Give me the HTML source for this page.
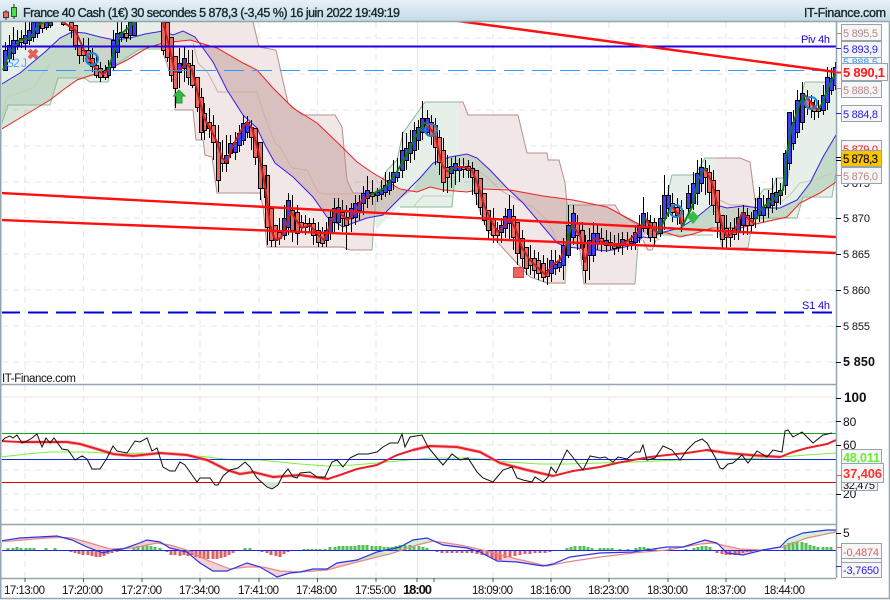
<!DOCTYPE html>
<html><head><meta charset="utf-8"><title>France 40</title>
<style>
html,body{margin:0;padding:0;background:#fff}
svg{display:block}
text{font-family:"Liberation Sans",Arial,sans-serif}
</style></head><body>
<svg xmlns="http://www.w3.org/2000/svg" width="890" height="600" viewBox="0 0 890 600">
<defs>
<linearGradient id="tb" x1="0" y1="0" x2="0" y2="1"><stop offset="0" stop-color="#e6f1f7"/><stop offset="1" stop-color="#c6dbe6"/></linearGradient>
<clipPath id="cp"><rect x="2" y="22" width="834" height="362"/></clipPath>
<clipPath id="cp2"><rect x="2" y="385" width="834" height="193"/></clipPath>
</defs>
<rect width="890" height="600" fill="#fff"/>

<!-- grid -->
<g stroke="#e6e6e6" fill="none">
<path stroke-dasharray="6 5" d="M25 22V578M83.500 22V578M142 22V578M200 22V578M259 22V578M317.500 22V578M376 22V578M493 22V578M551 22V578M609 22V578M668 22V578M726 22V578M785 22V578"/>
<path d="M417.500 22V578"/>
<path stroke-dasharray="6 5" d="M2 38H836M2 74H836M2 110H836M2 146H836M2 182H836M2 218H836M2 254H836M2 290H836M2 326H836M2 362H836M2 422H836M2 445H836M2 470H836M2 494H836M2 510H836"/>
<path d="M2 397H836"/>
</g>

<g clip-path="url(#cp)">
<!-- light envelopes -->
<g stroke-width="1">
<path fill="#e6f0e8" stroke="none" d="M2 22H163V49H140L110 68V82H90L84 78H58L50 105H8L2 123Z"/>
<path fill="#f2e9e8" stroke="none" d="M100 22H112V64H100Z"/>
<path fill="#f0e7e6" stroke="none" d="M163 22H253L259 47 276 50 288 103 302 115 335 116 342 127 347 180 353 193 376 197 372 250H350L343 248 267 247 263 207 260 194 217 193 212 157 205 155 203 140 196 140 193 110H175V87L163 53Z"/>
<path fill="#e6f0e8" stroke="none" d="M376 197L387 170 397 160 403 133 425 102H459V160L455 175 452 207H406L398 207 376 230Z"/>
<path fill="#f0e7e6" stroke="none" d="M459 102H463L468 115H518L527 153H547L548 160H559L565 183 567 205 565 284H547L530 277 512 258 500 245 487 230 477 203 472 170 459 160Z"/>
<path fill="#e6f0e8" stroke="none" d="M567 205H573V240L565 284Z"/>
<path fill="#f0e7e6" stroke="none" d="M573 205H615L621 215 636 224 643 240 638 245 635 284H584L580 250 573 240Z"/>
<path fill="#f0e7e6" stroke="none" d="M640 225L660 230 658 240 650 250H645Z"/>
<path fill="#e6f0e8" stroke="none" d="M658 235L672 175H695L705 158H716V215L713 230 660 235Z"/>
<path fill="#f0e7e6" stroke="none" d="M716 158H740L750 162 756 200 748 248H722L716 215Z"/>
<path fill="#e6f0e8" stroke="none" d="M756 200L764 189H773L776 178H788L797 110 805 82H827L832 68 836 67V173L832 196H803L797 219H752Z"/>
</g>
<!-- dark fills -->
<path fill="#3c7c48" fill-opacity=".2" d="M0 85L20 73 45 52 60 38 72 32 85 33 100 37 115 40 130 38 145 34 163 31 173 35 183 31 195 37 190 40 163 43 147 48 127 60 107 70 77 80 63 90 50 100 20 118 0 130Z"/>
<path fill="#8c4040" fill-opacity=".23" d="M190 40L217 48 243 63 257 70 273 88 293 108 317 123 340 145 357 162 373 173 400 190 412 191 398 200 383 215 367 218 353 223 343 227 327 217 313 197 293 177 275 163 265 145 257 128 243 115 227 90 213 62 195 37Z"/>
<path fill="#3c7c48" fill-opacity=".2" d="M412 191L420 178 433 163 450 157 467 154 477 158 490 170 507 188 483 189 467 192 443 190 430 187 417 192Z"/>
<path fill="#8c4040" fill-opacity=".22" d="M507 188L510 190 543 196 573 200 607 207 633 221 650 230 643 237 633 245 613 251 590 250 563 247 557 243 540 223 523 203Z"/>
<path fill="#3c7c48" fill-opacity=".2" d="M650 238L660 233 680 228 697 217 713 204 727 208 743 206 760 208 780 208 797 200 810 183 823 157 836 135V182L820 193 800 203 787 217 760 223 740 228 712 228 693 234 680 237 667 233Z"/>
<!-- step lines -->
<g fill="none" stroke="#8fb898" stroke-width="1">
<path d="M2 123L8 105H50L58 78H84L90 82H108L110 68 140 49H163"/>
<path d="M0 123L7 97 33 88 50 63" stroke="#b8d2bc"/>
<path d="M376 197L372 250"/>
<path d="M376 197L387 170 397 160 403 133 425 102H459"/>
<path d="M400 207H452L455 175 459 160"/>
<path d="M413 207L423 196H452" stroke="#b8d2bc"/>
<path d="M565 284L567 205H573"/>
<path d="M638 245L635 284"/>
<path d="M658 235L672 175H695L705 158H716"/>
<path d="M660 235H713"/>
<path d="M748 248L756 200 764 189H773L776 178H788L797 110 805 82H827L832 68H836"/>
<path d="M752 218H797L803 197H832L836 173"/>
<path d="M775 207L790 195 800 183 815 180 832 173" stroke="#b8d2bc"/>
</g>
<g fill="none" stroke="#b58f8c" stroke-width="1">
<path d="M253 22L259 47 276 50 288 103 302 115H335L342 127 347 180 353 193H376"/>
<path d="M163 53L175 87V110H193L196 140H203L205 155 212 157 217 193H260L263 207 267 247H343L350 250H372"/>
<path d="M193 43L198 63 208 73 218 92H257L265 117 275 143 280 147 292 168 307 170 318 192 323 194H353" stroke="#cfaeab"/>
<path d="M459 102H463L468 115H518L527 153H547L548 160H559L565 183 567 205"/>
<path d="M472 170L477 203 487 230 500 245 512 258 530 277 547 283H565"/>
<path d="M455 160L472 167 487 177 500 190 518 200 533 207 547 220 557 240" stroke="#cfaeab"/>
<path d="M573 205H615L621 215 636 224 650 228"/>
<path d="M573 240L580 250 584 284H635"/>
<path d="M590 235L610 240H630L645 232 660 240" stroke="#cfaeab"/>
<path d="M643 240L648 250H652L656 240"/>
<path d="M716 158H740L750 162 755 200"/>
<path d="M716 215L722 248H748"/>
<path d="M715 198L730 205H745L755 208" stroke="#cfaeab"/>
</g>
<!-- MA lines -->
<path fill="none" stroke="#3a20e8" stroke-width="1" d="M0 85L20 73 45 52 60 38 72 32 85 33 100 37 115 40 130 38 145 34 163 31 173 35 183 31 195 37 213 62 227 90 243 115 257 128 265 145 275 163 293 177 313 197 327 217 343 227 353 223 367 218 383 215 398 200 410 188 420 178 433 163 450 157 467 154 477 158 490 170 507 188 523 203 540 223 557 243 567 247 587 249 607 251 633 245 643 237 650 238 660 233 680 228 697 217 713 204 727 208 743 206 760 208 780 208 797 200 810 183 823 157 836 135"/>
<path fill="none" stroke="#f02020" stroke-width="1" d="M0 130L20 118 50 100 63 90 77 80 107 70 127 60 147 48 163 43 190 40 217 48 243 63 257 70 273 88 293 108 317 123 340 145 357 162 373 173 400 189 417 192 430 187 443 190 467 192 483 189 510 190 543 196 573 200 607 207 633 221 650 230 667 233 680 237 693 234 712 228 740 228 760 223 787 217 800 203 820 193 836 182"/>

<!-- wicks -->
<path fill="none" stroke="#000" stroke-width="1" d="M5.500 42V70M9.500 35V62M13.500 27V60M17.500 30V50M21.500 30V48M25.500 22V50M29.500 22V45M33.500 22V42M37.500 22V38M42.500 22V33M46.500 22V30M50.500 22V28M63.500 22V26M71.500 22V38M75.500 25V50M79.500 45V64M83.500 38V62M88.500 38V64M92.500 48V72M96.500 55V78M100.500 62V82M105.500 65V80M108.500 60V78M113.500 30V70M117.500 22V58M121.500 22V42M126.500 25V42M130.500 22V40M134.500 22V36M163.500 22V55M167.500 22V62M171.500 37V82M175.500 56V108M179.500 48V88M184.500 47V82M188.500 50V85M192.500 50V88M197.500 77V112M201.500 88V140M204.500 103V140M209.500 108V138M213.500 115V160M218.500 125V192M222.500 140V172M226.500 135V172M230.500 135V158M235.500 132V160M239.500 125V152M243.500 115V145M247.500 116V138M251.500 120V150M255.500 128V165M260.500 142V200M264.500 165V198M267.500 175V245M271.500 208V247M275.500 225V247M279.500 218V245M284.500 205V240M288.500 193V235M292.500 195V242M297.500 205V245M301.500 215V232M305.500 215V235M309.500 218V232M313.500 218V245M318.500 222V247M322.500 227V247M326.500 222V247M330.500 210V240M334.500 198V232M338.500 198V230M342.500 200V232M346.500 205V250M351.500 203V232M355.500 195V225M359.500 195V220M363.500 186V215M367.500 176V208M372.500 180V205M377.500 188V202M381.500 180V200M385.500 172V197M389.500 172V195M393.500 160V190M397.500 158V182M402.500 132V178M406.500 133V170M410.500 130V163M414.500 122V160M418.500 120V150M422.500 101V140M427.500 110V135M431.500 115V145M435.500 118V165M439.500 130V175M443.500 138V192M447.500 155V193M451.500 158V188M455.500 156V185M459.500 158V182M463.500 158V178M468.500 160V178M472.500 162V195M476.500 170V205M480.500 178V215M484.500 193V225M488.500 210V240M493.500 208V243M497.500 222V243M501.500 218V243M505.500 208V238M509.500 195V240M513.500 205V250M517.500 222V265M522.500 230V268M526.500 247V275M530.500 245V275M534.500 250V278M538.500 252V280M543.500 255V282M547.500 258V285M551.500 250V282M555.500 250V275M559.500 255V272M563.500 238V280M568.500 205V258M573.500 205V245M577.500 215V250M582.500 222V260M585.500 235V283M589.500 228V280M593.500 222V262M597.500 225V250M601.500 228V252M606.500 230V252M610.500 232V250M614.500 235V255M618.500 233V252M622.500 232V255M627.500 232V250M631.500 235V250M635.500 225V250M639.500 215V243M643.500 197V232M647.500 212V235M650.500 215V242M654.500 218V247M660.500 205V237M664.500 175V230M668.500 185V217M672.500 193V222M677.500 198V225M681.500 200V232M688.500 185V215M693.500 172V210M697.500 160V205M701.500 158V192M705.500 160V195M709.500 165V205M713.500 170V215M717.500 190V238M722.500 215V248M726.500 215V248M730.500 222V247M734.500 218V240M738.500 208V240M743.500 205V235M747.500 208V235M751.500 212V232M755.500 198V228M759.500 187V222M763.500 195V222M768.500 190V218M772.500 178V213M776.500 178V210M780.500 183V205M785.500 150V195M789.500 112V170M793.500 110V150M797.500 90V138M802.500 82V130M807.500 90V115M811.500 95V118M814.500 100V120M818.500 100V118M823.500 85V115M827.500 67V110M831.500 68V95M835.500 62V90"/>
<!-- blue bodies -->
<path transform="translate(-.5,.5)" fill="#3f3ff2" stroke="#000" stroke-width="1" d="M4 50h4v20h-4zM8 45h4v13h-4zM12 40h4v13h-4zM16 40h4v5h-4zM24 35h4v8h-4zM28 30h4v10h-4zM32 22h4v15h-4zM36 22h4v11h-4zM45 22h4v5h-4zM49 22h4v3h-4zM107 67h4v8h-4zM112 40h4v27h-4zM116 33h4v19h-4zM120 32h4v5h-4zM129 22h4v13h-4zM133 22h4v13h-4zM178 63h4v9h-4zM183 58h4v10h-4zM225 155h4v8h-4zM229 143h4v10h-4zM234 142h4v10h-4zM238 133h4v12h-4zM242 123h4v17h-4zM246 122h4v10h-4zM283 218h4v17h-4zM287 200h4v27h-4zM325 230h4v10h-4zM329 217h4v15h-4zM333 208h4v14h-4zM337 207h4v15h-4zM350 208h4v10h-4zM354 203h4v14h-4zM358 202h4v8h-4zM362 193h4v10h-4zM366 190h4v8h-4zM376 192h4v3h-4zM380 190h4v4h-4zM384 185h4v7h-4zM388 180h4v10h-4zM392 172h4v10h-4zM396 172h4v5h-4zM401 150h4v20h-4zM405 148h4v12h-4zM409 142h4v11h-4zM413 130h4v20h-4zM417 127h4v13h-4zM421 118h4v14h-4zM426 118h4v14h-4zM450 166h4v7h-4zM454 163h4v7h-4zM458 166h4v4h-4zM500 225h4v7h-4zM504 216h4v12h-4zM508 209h4v14h-4zM550 260h4v13h-4zM554 264h4v4h-4zM558 262h4v5h-4zM562 245h4v20h-4zM567 225h4v30h-4zM572 213h4v24h-4zM588 240h4v15h-4zM592 233h4v22h-4zM596 233h4v10h-4zM605 240h4v5h-4zM617 243h4v4h-4zM621 239h4v6h-4zM630 241h4v2h-4zM634 232h4v10h-4zM638 225h4v12h-4zM642 213h4v15h-4zM659 218h4v15h-4zM663 195h4v23h-4zM667 195h4v13h-4zM687 193h4v15h-4zM692 183h4v20h-4zM696 173h4v20h-4zM700 167h4v16h-4zM737 217h4v15h-4zM742 212h4v13h-4zM754 210h4v8h-4zM758 198h4v17h-4zM762 207h4v8h-4zM767 198h4v9h-4zM771 193h4v12h-4zM775 192h4v10h-4zM779 190h4v5h-4zM784 153h4v32h-4zM788 112h4v51h-4zM792 122h4v21h-4zM796 100h4v32h-4zM801 93h4v29h-4zM822 95h4v15h-4zM826 77h4v25h-4zM830 78h4v12h-4zM834 67h4v18h-4z"/>
<!-- red bodies -->
<path transform="translate(-.5,.5)" fill="#e86a62" stroke="#000" stroke-width="1" d="M20 38h4v4h-4zM41 22h4v6h-4zM62 22h4v2h-4zM70 22h4v8h-4zM74 25h4v20h-4zM78 45h4v10h-4zM82 50h4v5h-4zM87 50h4v12h-4zM91 58h4v8h-4zM95 65h4v10h-4zM99 68h4v9h-4zM104 70h4v7h-4zM125 33h4v4h-4zM162 22h4v28h-4zM166 22h4v35h-4zM170 37h4v38h-4zM174 56h4v32h-4zM187 63h4v14h-4zM191 65h4v20h-4zM196 77h4v30h-4zM200 97h4v35h-4zM203 113h4v17h-4zM208 122h4v6h-4zM212 125h4v17h-4zM217 142h4v38h-4zM221 158h4v5h-4zM250 127h4v10h-4zM254 128h4v29h-4zM259 142h4v46h-4zM263 165h4v23h-4zM266 175h4v52h-4zM270 208h4v32h-4zM274 225h4v15h-4zM278 232h4v6h-4zM291 210h4v20h-4zM296 212h4v21h-4zM300 222h4v5h-4zM304 223h4v4h-4zM308 223h4v3h-4zM312 223h4v12h-4zM317 230h4v12h-4zM321 233h4v10h-4zM341 212h4v6h-4zM345 217h4v8h-4zM371 192h4v4h-4zM430 122h4v13h-4zM434 125h4v22h-4zM438 137h4v25h-4zM442 150h4v32h-4zM446 167h4v10h-4zM462 166h4v3h-4zM467 166h4v4h-4zM471 168h4v9h-4zM475 170h4v23h-4zM479 178h4v29h-4zM483 193h4v27h-4zM487 210h4v20h-4zM492 218h4v17h-4zM496 230h4v5h-4zM512 216h4v21h-4zM516 222h4v31h-4zM521 238h4v20h-4zM525 247h4v21h-4zM529 258h4v7h-4zM533 258h4v12h-4zM537 260h4v13h-4zM542 263h4v14h-4zM546 270h4v6h-4zM576 223h4v12h-4zM581 230h4v17h-4zM584 242h4v28h-4zM600 238h4v5h-4zM609 242h4v3h-4zM613 243h4v5h-4zM626 240h4v4h-4zM646 220h4v8h-4zM649 222h4v15h-4zM653 222h4v15h-4zM671 203h4v9h-4zM676 207h4v8h-4zM680 210h4v13h-4zM704 168h4v9h-4zM708 172h4v20h-4zM712 180h4v25h-4zM716 190h4v32h-4zM721 215h4v24h-4zM725 228h4v9h-4zM729 230h4v7h-4zM733 228h4v6h-4zM746 215h4v10h-4zM750 218h4v7h-4zM806 99h4v8h-4zM810 102h4v6h-4zM813 108h4v3h-4zM817 108h4v3h-4z"/>
<!-- price tracking line -->
<g fill="none" stroke-width="2" stroke-linejoin="round">
<path stroke="#c42222" d="M63 22L75 30 85 52 95 68 103 74 108 70M163 22L170 50 175 72 180 70 186 63 192 70 197 90 204 118 210 128 217 142 222 158 227 162 232 148 240 132 247 122 252 128 258 150 265 185 270 225 275 240 281 238 286 225 291 212 296 220 302 228 310 225 318 235 324 240 330 225 336 212 342 215 348 220 355 212 362 200 370 195M425 122L435 135 442 165 448 172M455 167L465 167 472 170 478 185 484 205 492 222 498 232 505 225 510 218 516 230 522 248 530 260 540 270 546 275 552 265 560 260 566 245M572 225L580 235 585 262 590 245 596 238 604 243 615 246 628 241 638 232 642 225M645 218L652 228 658 233M672 206L680 217 682 227M705 168L712 183 718 207 723 230 728 237 735 230 742 213 750 220 755 224M805 95L813 105 818 110"/>
<path stroke="#0e7a1e" d="M3 70L10 52 20 40 30 38 38 25 45 22M108 70L113 55 120 35 135 22M370 195L385 188 395 175 405 158 415 138 425 122M448 172L455 167M566 245L572 225M642 225L645 218M658 233L667 215 672 206M682 227L692 207 698 180 705 168M755 220L763 207 773 200 783 190 787 153 792 127 800 103 805 95M818 110L823 102 830 83 836 73"/>
</g>

<!-- horizontal levels -->
<path d="M0 46.500H836" stroke="#2000e0" stroke-width="2"/>
<path d="M28 70.500H836" stroke="#3399ff" stroke-width="1" stroke-dasharray="20 8"/>
<path d="M0 312.500H836" stroke="#0000dd" stroke-width="2" stroke-dasharray="20 8"/>
<!-- trend lines -->
<path d="M458 21L836 72M0 193L836 237M0 220L836 253" stroke="#ff1010" stroke-width="2.400" fill="none"/>

<!-- markers -->
<path d="M29 50L37 58M37 50L29 58" stroke="#e2605e" stroke-width="4"/>
<path d="M179 90L185 96H182V103H176.500V96H173.500Z" fill="#33bb44" stroke="#2a9a3a"/>
<path d="M693 211L699 217 693 224 687 217Z" fill="#33bb44"/>
<rect x="513.500" y="267.500" width="10" height="10" fill="#ee6464" stroke="#d24444"/>
<g fill="none" stroke="#2084d4" stroke-width="2">
<circle cx="92" cy="59" r="6"/><circle cx="431" cy="130" r="6"/><circle cx="676" cy="211" r="6"/><circle cx="811" cy="103" r="6"/>
</g>
</g>

<text x="6" y="67" font-size="12" fill="#4da6ff" textLength="21">S2 J</text>
<text x="801" y="43" font-size="11" fill="#2000d0" textLength="29">Piv 4h</text>
<text x="802" y="309" font-size="11" fill="#2000d0" textLength="28">S1 4h</text>
<text x="2" y="382" font-size="11.500" fill="#111" textLength="74">IT-Finance.com</text>

<!-- panel 1 -->
<g clip-path="url(#cp2)" fill="none">
<path d="M0 433.500H836" stroke="#18a818"/>
<path d="M0 482.500H836" stroke="#dd0000"/>
<path fill="#cfe6cf" stroke="none" d="M262 482H283L272 489Z"/>
<path stroke="#7cf03a" stroke-width="1.100" d="M0 457L27 454 50 452 87 452 117 454 143 453 177 454 207 457 233 460 260 460 300 464 327 466 353 465 377 463 430 458 470 458 507 462 540 464 567 464 600 463 633 462 680 460 720 459 767 458 807 455 836 453"/>
<path d="M0 459.500H836" stroke="#1828e0"/>
<path stroke="#ff9a9a" stroke-width="3.500" opacity=".7" d="M20 442L67 442 80 444 97 449 113 454 133 456 160 453 187 455 207 460 227 470 240 474 253 472 273 477 300 475 328 479M413 450L430 446 457 447 480 452 500 463 527 470 553 476M707 450L727 453 750 455 780 457"/>
<path stroke="#e8202a" stroke-width="2" d="M0 441L20 442 67 442 80 444 97 449 113 454 133 456 160 453 187 455 207 460 227 470 240 474 253 472 273 477 300 475 328 479 340 475 357 469 377 465 397 455 413 450 430 446 457 447 480 452 500 463 527 470 553 476 573 471 600 467 617 463 633 460 650 457 667 455 687 453 707 450 727 453 750 455 780 457 793 452 807 448 827 444 836 440"/>
<path stroke="#111" stroke-width="1" d="M0 443L5 438 10 436 13 438 17 435 22 443 27 441 32 438 37 434 42 447 46 438 50 443 54 438 62 449 68 450 75 460 82 456 87 459 92 469 100 469 107 458 113 446 117 451 122 452 127 453 135 441 140 442 147 438 152 451 157 448 163 467 170 471 175 471 180 462 185 465 197 482 200 478 210 478 215 485 218 485 223 476 230 470 238 468 245 462 250 467 257 478 267 487 272 489 278 485 283 475 288 469 293 477 297 478 300 473 310 472 317 477 325 477 332 462 337 460 343 467 350 458 358 454 368 454 377 452 383 447 390 443 398 443 402 434 405 447 410 437 422 435 428 447 437 458 443 465 452 454 460 460 468 458 477 472 483 478 493 482 503 470 512 467 517 478 523 480 532 482 535 477 543 482 548 477 551 467 556 473 567 450 583 470 590 456 600 458 605 457 613 462 618 457 627 459 635 452 640 452 643 445 647 460 655 458 663 446 672 450 680 460 687 450 695 442 702 439 707 443 715 457 720 468 723 469 728 464 733 463 742 455 748 463 757 451 767 457 773 450 782 452 785 431 788 430 793 437 802 432 813 443 823 435 832 433"/>
</g>

<!-- panel 2 -->
<g clip-path="url(#cp2)" fill="none">
<path stroke="none" fill="#e68a8a" fill-opacity=".38" d="M0 541L20 538 57 536 72 540 87 547 103 553 113 550 123 549 137 544 147 540 160 542 170 548 187 552 200 563 213 571 227 571 247 563 260 567 277 577 290 573 300 572 313 569 327 569 337 563 357 560 377 552 390 554 357 562 327 570 300 572 280 571 263 567 247 567 230 569 207 560 187 550 170 545 157 543 133 548 110 549 90 543 72 538Z"/>
<path stroke="none" fill="#e68a8a" fill-opacity=".38" d="M427 538L443 545 467 548 480 552 497 561 517 562 543 566 553 564 547 566 517 559 487 551 460 545 433 541Z"/>
<path stroke="none" fill="#e68a8a" fill-opacity=".38" d="M705 540L717 543 727 553 743 555 763 550 740 549 713 543 700 544Z"/>
<path stroke="none" fill="#b9e6b9" fill-opacity=".6" d="M337 563L357 560 377 552 400 547 413 540 427 538 433 541 417 545 390 554 357 562Z"/>
<path stroke="none" fill="#b9e6b9" fill-opacity=".6" d="M780 547L788 539 803 533 827 530 836 530V532L807 538 783 547Z"/>
<path stroke="#52c052" stroke-width="3" d="M8 550V548M13 550V548M17 550V547M21 550V548M26 550V548M30 550V548M34 550V548M46 550V548M55 550V548M134 550V547M138 550V546M143 550V546M147 550V545M151 550V546M155 550V547M160 550V548M245 550V548M250 550V548M304 550V549M308 550V549M312 550V549M316 550V549M320 550V549M325 550V549M330 550V547M335 550V547M339 550V546M343 550V546M347 550V546M351 550V546M355 550V546M359 550V545M363 550V545M367 550V545M372 550V546M376 550V546M380 550V546M384 550V547M388 550V547M392 550V547M396 550V546M400 550V545M405 550V545M410 550V545M414 550V546M419 550V546M423 550V547M427 550V548M567 550V548M571 550V547M575 550V546M580 550V546M584 550V546M588 550V547M592 550V548M600 550V548M604 550V548M608 550V548M612 550V548M620 550V549M628 550V549M636 550V548M640 550V547M644 550V547M648 550V548M655 550V549M670 550V548M686 550V549M694 550V548M698 550V547M702 550V546M706 550V546M710 550V547M785 550V545M789 550V543M793 550V542M797 550V542M802 550V542M806 550V543M810 550V545M814 550V546M818 550V547M823 550V547M827 550V547M831 550V547"/>
<path stroke="#de6060" stroke-width="3" d="M63 550V551M67 550V551M71 550V552M75 550V553M79 550V554M83 550V555M88 550V555M92 550V556M96 550V557M100 550V557M104 550V556M108 550V554M112 550V553M117 550V552M167 550V552M171 550V555M175 550V555M180 550V556M184 550V555M188 550V556M192 550V555M196 550V557M200 550V558M204 550V559M208 550V559M213 550V559M217 550V559M221 550V558M225 550V557M229 550V555M233 550V553M238 550V551M262 550V552M267 550V553M271 550V555M276 550V556M280 550V557M284 550V554M288 550V552M292 550V551M297 550V551M437 550V552M442 550V553M447 550V553M452 550V553M457 550V553M462 550V553M467 550V553M472 550V553M477 550V554M482 550V555M487 550V556M492 550V558M496 550V560M500 550V560M505 550V558M510 550V557M515 550V556M520 550V555M525 550V554M530 550V554M535 550V553M540 550V553M545 550V553M550 550V552M555 550V551M717 550V553M722 550V554M726 550V555M730 550V555M735 550V555M739 550V554M743 550V553M747 550V552M751 550V552"/>
<path d="M0 550.500H836" stroke="#1828e0"/>
<path stroke="#e68888" stroke-width="1.200" d="M0 542L57 537 72 538 90 543 110 549 133 548 157 543 170 545 187 550 207 560 230 569 247 567 263 567 280 571 300 572 327 570 357 562 390 554 417 545 433 541 460 545 487 551 517 559 547 566 567 562 600 557 633 553 667 550 700 544 713 543 740 549 763 550 783 547 807 538 836 532"/>
<path stroke="#2a34e6" stroke-width="1.200" d="M0 541L20 538 57 536 72 540 87 547 103 553 113 550 123 549 137 544 147 540 160 542 170 548 187 552 200 563 213 571 227 571 247 563 260 567 277 577 290 573 300 572 313 569 327 569 337 563 357 560 377 552 400 547 413 540 427 538 443 545 467 548 480 552 497 561 517 562 543 566 553 564 570 557 600 553 633 552 667 547 683 547 705 540 717 543 727 553 743 555 763 550 780 547 788 539 803 533 827 530 836 530"/>
</g>

<!-- frames -->
<g stroke="#93a6af" fill="none">
<path d="M0.500 22V598" stroke-width="2"/>
<path d="M0 384.500H836M0 524.500H836M0 578.500H836" stroke-width="1.400"/>
<path d="M836.500 22V578" stroke-width="1.500"/>
<path d="M0 598.500H890M889.500 0V599" stroke-width="1.500"/>
</g>

<!-- title -->
<rect x="0" y="0" width="890" height="21" fill="url(#tb)"/>
<path d="M0 21.500H890" stroke="#93a6af" stroke-width="1.500"/>
<g>
<path d="M6 10V20M14 4V19" stroke="#223" stroke-width="1"/>
<rect x="3.500" y="12" width="5" height="5.500" fill="#ef6f68" stroke="#4a3030"/>
<rect x="11.500" y="7.500" width="5" height="9" fill="#4fdc4a" stroke="#2b5b2b"/>
</g>
<text x="23" y="17" font-size="12.500" fill="#17252e" stroke="#17252e" stroke-width=".35" textLength="377">France 40 Cash (1€) 30 secondes 5 878,3 (-3,45 %) 16 juin 2022 19:49:19</text>
<text x="804" y="17" font-size="12.500" fill="#17252e" stroke="#17252e" stroke-width=".35" textLength="82">IT-Finance.com</text>

<!-- axis ticks and plain labels -->
<g stroke="#111" fill="none">
<path d="M836 218.500H841M836 254.500H841M836 290.500H841M836 326.500H841M836 362.500H841M836 398.500H841M836 421.500H841M836 445.500H841M836 494.500H841M836 533.500H841"/>
</g>
<path d="M836 33.500H841M836 88.500H841M836 175.500H841" stroke="#b08a88"/>
<path d="M836 48.500H841M836 113.500H841" stroke="#2a20e0"/>
<path d="M836 72.500H841" stroke="#ff2020" stroke-width="2"/>
<path d="M836 157.500H841M836 160.500H841" stroke="#000"/>
<path d="M836 475.500H841" stroke="#e06060"/>
<path d="M836 547.500H841" stroke="#e06060"/>
<path d="M836 566.500H841" stroke="#2a20e0"/>
<g font-size="11" fill="#111">
<text x="843" y="222" textLength="27">5 870</text>
<text x="843" y="258" textLength="27">5 865</text>
<text x="843" y="294" textLength="27">5 860</text>
<text x="843" y="330" textLength="27">5 855</text>
<text x="843" y="187" textLength="27">5 875</text>
<text x="843" y="426" font-size="12">80</text>
<text x="843" y="449" font-size="12">60</text>
<text x="843" y="498" font-size="12">20</text>
<text x="843" y="537" font-size="12">5</text>
</g>
<text x="843" y="366" font-size="12.500" font-weight="bold" fill="#111" textLength="32">5 850</text>
<text x="844" y="402" font-size="13.500" font-weight="bold" fill="#111">100</text>

<!-- price boxes -->
<g stroke="#93a6af" fill="#f6f6f6">
<rect x="841.500" y="24.500" width="40" height="16"/>
<rect x="841.500" y="41.500" width="40" height="16"/>
<rect x="841.500" y="57.500" width="40" height="10"/>
<rect x="841.500" y="81.500" width="40" height="16"/>
<rect x="841.500" y="105.500" width="40" height="16"/>
<rect x="841.500" y="140.500" width="40" height="12"/>
</g>
<g font-size="11">
<text x="843" y="37" fill="#b48a88" textLength="35">5 895,5</text>
<text x="843" y="53" fill="#2a20e0" textLength="35">5 893,9</text>
<text x="843" y="66" fill="#3399ff" textLength="35">5 888,5</text>
<text x="843" y="94" fill="#b48a88" textLength="35">5 888,3</text>
<text x="843" y="118" fill="#2a20e0" textLength="35">5 884,8</text>
<text x="843" y="153" fill="#e02020" textLength="35">5 879,0</text>
</g>
<rect x="841.500" y="63.500" width="46" height="17" fill="#f8f8f8" stroke="#93a6af"/>
<text x="843" y="77" font-size="13" font-weight="bold" fill="#ff1a1a" textLength="42">5 890,1</text>
<rect x="841.500" y="150.500" width="40" height="16" fill="#ffc400" stroke="#93a6af"/>
<text x="843" y="163" font-size="11.500" fill="#111" stroke="#111" stroke-width=".2" textLength="35">5 878,3</text>
<rect x="841.500" y="167.500" width="40" height="16" fill="#f6f6f6" stroke="#93a6af"/>
<text x="843" y="180" font-size="11" fill="#b48a88" textLength="35">5 876,0</text>

<g stroke="#93a6af" fill="#f6f6f6">
<rect x="841.500" y="449.500" width="40" height="15"/>
<rect x="841.500" y="477.500" width="36" height="13"/>
</g>
<text x="843" y="462" font-size="12.500" font-weight="bold" fill="#66ee33" textLength="37">48,011</text>
<text x="843" y="489" font-size="11" fill="#111" textLength="32">32,475</text>
<rect x="841.500" y="463.500" width="42" height="19" fill="#f6f6f6" stroke="#93a6af"/>
<text x="843" y="478" font-size="13" font-weight="bold" fill="#ff3333" textLength="39">37,406</text>

<g stroke="#93a6af" fill="#f6f6f6">
<rect x="841.500" y="543.500" width="40" height="15"/>
<rect x="841.500" y="558.500" width="40" height="5"/>
<rect x="841.500" y="562.500" width="40" height="15"/>
</g>
<text x="843" y="556" font-size="11" fill="#d86060" textLength="36">-0,4874</text>
<text x="843" y="574" font-size="11" fill="#2a20e0" textLength="36">-3,7650</text>

<!-- time axis -->
<path d="M25 578V582M83.500 578V582M142 578V582M200 578V582M259 578V582M317.500 578V582M376 578V582M417 578V582M434 578V582M493 578V582M551 578V582M609 578V582M668 578V582M726 578V582M785 578V582" stroke="#556" fill="none"/>
<g font-size="11.500" fill="#111">
<text x="4" y="594" textLength="41">17:13:00</text>
<text x="62" y="594" textLength="41">17:20:00</text>
<text x="121" y="594" textLength="41">17:27:00</text>
<text x="179" y="594" textLength="41">17:34:00</text>
<text x="238" y="594" textLength="41">17:41:00</text>
<text x="296" y="594" textLength="41">17:48:00</text>
<text x="355" y="594" textLength="41">17:55:00</text>
<text x="472" y="594" textLength="41">18:09:00</text>
<text x="530" y="594" textLength="41">18:16:00</text>
<text x="588" y="594" textLength="41">18:23:00</text>
<text x="647" y="594" textLength="41">18:30:00</text>
<text x="705" y="594" textLength="41">18:37:00</text>
<text x="764" y="594" textLength="41">18:44:00</text>
</g>
<text x="403" y="594" font-size="13" font-weight="bold" fill="#111" textLength="29">18:00</text>
</svg>
</body></html>
